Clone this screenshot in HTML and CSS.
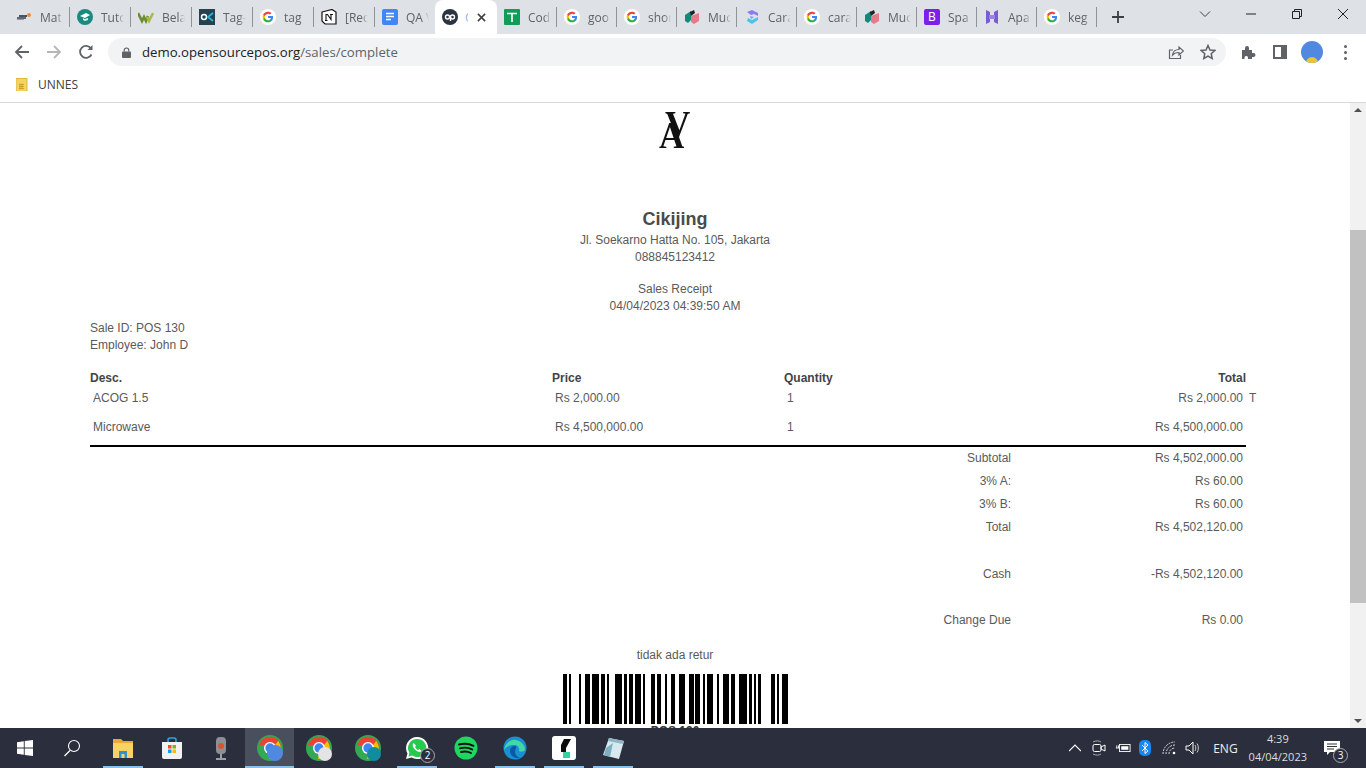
FILE: index.html
```html
<!DOCTYPE html>
<html lang="en">
<head>
  <meta charset="UTF-8">
  <title>Open Source Point of Sale</title>
  <link rel="stylesheet" href="styles.css">
</head>
<body>
  <svg class="defs" width="0" height="0">
    <symbol id="g" viewBox="0 0 24 24">
      <circle cx="12" cy="12" r="12" fill="#fff"/>
      <path fill="#4285f4" d="M19.6 12.2c0-.6-.1-1.100-.2-1.600H12v3h4.300c-.2 1-.8 1.800-1.600 2.400v2h2.600c1.500-1.400 2.300-3.400 2.300-5.800z"/>
      <path fill="#34a853" d="M12 20c2.200 0 4-.7 5.300-1.900l-2.600-2c-.7.500-1.600.8-2.700.8-2.100 0-3.900-1.400-4.500-3.300H4.800v2.100C6.100 18.300 8.800 20 12 20z"/>
      <path fill="#fbbc05" d="M7.500 13.600c-.3-1-.3-2.100 0-3.100V8.400H4.800c-1.100 2.200-1.100 5 0 7.200z"/>
      <path fill="#ea4335" d="M12 7.200c1.200 0 2.200.4 3 1.200l2.300-2.300C15.900 4.800 14.100 4 12 4 8.800 4 6.100 5.700 4.800 8.400l2.700 2.100c.6-1.900 2.400-3.300 4.500-3.300z"/>
    </symbol>
    <symbol id="mu" viewBox="0 0 16 16">
      <path fill="#0f8a7c" d="M1 6l6-4v9l-3 3-3-2z"/>
      <path fill="#e57a88" d="M7 7l8-3v8l-5 3-3-2z"/>
      <path fill="#222" d="M6 3l4-2 1 3-4 3z"/>
    </symbol>
    <symbol id="chrome" viewBox="0 0 28 28">
      <circle cx="14" cy="14" r="10" fill="none" stroke="#34a853" stroke-width="8"/>
      <path d="M5.300 9A10 10 0 0 1 22.700 9L14 9z" fill="#ea4335" stroke="#ea4335" stroke-width="4"/>
      <path d="M22.700 9A10 10 0 0 1 15 24L19 14z" fill="#fbbc05" stroke="#fbbc05" stroke-width="3"/>
      <circle cx="14" cy="14" r="6.500" fill="#fff"/>
      <circle cx="14" cy="14" r="5" fill="#4285f4"/>
    </symbol>
  </svg>

  <div class="browser">
    <div class="tabstrip">
      <div class="tab"><svg class="fav" viewBox="0 0 16 16"><rect x="1" y="8" width="9" height="2" fill="#667"/><rect x="1" y="10" width="7" height="1" fill="#99a"/><circle cx="13" cy="6" r="2" fill="#f08a3c"/><rect x="3" y="6" width="8" height="2" fill="#456"/></svg><span class="tab-title">Mat</span></div>
      <div class="tab"><svg class="fav" viewBox="0 0 16 16"><circle cx="8" cy="8" r="8" fill="#1a8a80"/><path d="M3 7l6-3 4 2-5 3z" fill="#fff"/><path d="M6 9l2 1 3-1v2l-3 1-2-1z" fill="#d5efec"/></svg><span class="tab-title">Tuto</span></div>
      <div class="tab"><svg class="fav" viewBox="0 0 16 16"><path d="M0 4l4 8 2-4 2 4 2-5" fill="none" stroke="#6d8b2f" stroke-width="2.600"/><path d="M9 8l2 4 4-8" fill="none" stroke="#a9b84a" stroke-width="2.400"/></svg><span class="tab-title">Bela</span></div>
      <div class="tab"><svg class="fav" viewBox="0 0 16 16"><rect width="16" height="16" fill="#26414f"/><circle cx="5" cy="8" r="2.500" fill="none" stroke="#fff" stroke-width="1.500"/><path d="M14 4L9 8l5 4" fill="none" stroke="#27b5d8" stroke-width="1.800"/></svg><span class="tab-title">Tag-</span></div>
      <div class="tab"><svg class="fav"><use href="#g"/></svg><span class="tab-title">tag</span></div>
      <div class="tab"><svg class="fav" viewBox="0 0 16 16"><path d="M1 3l10-2.500 4 2.500v12H4l-3-3z" fill="#fff" stroke="#111" stroke-width="1.200"/><path d="M5 5.500h1.500l3.500 5v-5h1.500M4.500 5.500h2M9 5.500h3M5 5.500v6M4 11.500h2.500" fill="none" stroke="#111" stroke-width="1.100"/></svg><span class="tab-title">[Req</span></div>
      <div class="tab tab-before-active"><svg class="fav" viewBox="0 0 16 16"><rect width="16" height="16" rx="2" fill="#4285f4"/><path d="M4 4.500h8M4 7.500h8M4 10.500h5" stroke="#fff" stroke-width="1.500"/></svg><span class="tab-title">QA V</span></div>
      <div class="tab tab-active"><svg class="fav" viewBox="0 0 16 16"><circle cx="8" cy="8" r="8" fill="#2b3440"/><circle cx="5.500" cy="8" r="2" fill="none" stroke="#fff" stroke-width="1.400"/><circle cx="10.500" cy="8" r="2" fill="none" stroke="#fff" stroke-width="1.400"/><path d="M8.500 8v4" stroke="#fff" stroke-width="1.400"/></svg><span class="tab-sliver">O</span><svg class="tab-close" viewBox="0 0 10 10"><path d="M1 1l8 8M9 1l-8 8" stroke="#3c4043" stroke-width="1.700"/></svg></div>
      <div class="tab tab-narrow"><svg class="fav" viewBox="0 0 16 16"><rect width="16" height="16" rx="1" fill="#0f9d58"/><path d="M3 4.500h10M8 4.500V13" stroke="#fff" stroke-width="1.600"/></svg><span class="tab-title">Cod</span></div>
      <div class="tab tab-narrow"><svg class="fav"><use href="#g"/></svg><span class="tab-title">goo</span></div>
      <div class="tab tab-narrow"><svg class="fav"><use href="#g"/></svg><span class="tab-title">shor</span></div>
      <div class="tab tab-narrow"><svg class="fav"><use href="#mu"/></svg><span class="tab-title">Muc</span></div>
      <div class="tab tab-narrow"><svg class="fav" viewBox="0 0 16 16"><path d="M3 3l5-2 6 3v3l-4-2-3 1z" fill="#8b7cf0"/><path d="M14 8v3l-6 4-5-3 1-3 4 2z" fill="#46c6e8"/><path d="M6 7l4 1-3 2z" fill="#7fa0f0"/></svg><span class="tab-title">Cara</span></div>
      <div class="tab tab-narrow"><svg class="fav"><use href="#g"/></svg><span class="tab-title">cara</span></div>
      <div class="tab tab-narrow"><svg class="fav"><use href="#mu"/></svg><span class="tab-title">Muc</span></div>
      <div class="tab tab-narrow"><span class="fav fav-b">B</span><span class="tab-title">Spa</span></div>
      <div class="tab tab-narrow"><svg class="fav" viewBox="0 0 16 16"><path d="M2 1l4 2v10l-4 2zM10 3l4-2v14l-4-2z" fill="#7a5bd6"/><path d="M5 6l6 0v4H5z" fill="#9b83e6"/></svg><span class="tab-title">Apa</span></div>
      <div class="tab tab-narrow"><svg class="fav"><use href="#g"/></svg><span class="tab-title">keg</span></div>
      <svg class="new-tab" viewBox="0 0 12 12"><path d="M6 0v12M0 6h12" stroke="#3c4043" stroke-width="1.800"/></svg>
      <div class="win-controls">
        <svg viewBox="0 0 12 12"><path d="M1 3.500l5 5 5-5" fill="none" stroke="#3c4043" stroke-width="1"/></svg>
        <svg viewBox="0 0 12 12"><path d="M1 6h10" stroke="#222" stroke-width="1"/></svg>
        <svg viewBox="0 0 12 12"><path d="M1.500 3.500h7v7h-7zM3.500 3.500v-2h7v7h-2" fill="none" stroke="#222" stroke-width="1"/></svg>
        <svg viewBox="0 0 12 12"><path d="M1 1l10 10M11 1L1 11" stroke="#222" stroke-width="1"/></svg>
      </div>
    </div>

    <div class="toolbar">
      <svg class="tool" viewBox="0 0 16 16"><path d="M15 8H2M8 2L2 8l6 6" fill="none" stroke="#5f6368" stroke-width="1.800"/></svg>
      <svg class="tool tool-off" viewBox="0 0 16 16"><path d="M1 8h13M8 2l6 6-6 6" fill="none" stroke="#b4b6b9" stroke-width="1.800"/></svg>
      <svg class="tool" viewBox="0 0 16 16"><path d="M13.500 10.500A6 6 0 1 1 13 4.500" fill="none" stroke="#5f6368" stroke-width="1.800"/><path d="M14.500 1v5h-5z" fill="#5f6368"/></svg>
      <div class="omnibox">
        <svg class="lock" viewBox="0 0 10 12"><path d="M2.500 5V3.500a2.500 2.500 0 0 1 5 0V5" fill="none" stroke="#5f6368" stroke-width="1.300"/><rect y="5" width="10" height="7" rx="1" fill="#5f6368"/></svg>
        <span class="url">demo.opensourcepos.org<span class="url-path">/sales/complete</span></span>
        <svg class="omni-icon omni-share" viewBox="0 0 16 16"><path d="M5 6H1.500v8.500h11V11" fill="none" stroke="#5f6368" stroke-width="1.200"/><path d="M4.500 11c.5-3.500 3-5.500 6.500-5.500V3l4.500 4-4.500 4V8.500c-3 0-5 .8-6.500 2.500z" fill="none" stroke="#5f6368" stroke-width="1.200"/></svg>
        <svg class="omni-icon" viewBox="0 0 16 16"><path d="M8 1.500l2 4.500 4.800.5-3.600 3.200 1 4.800L8 12l-4.200 2.500 1-4.800L1.200 6.500 6 6z" fill="none" stroke="#5f6368" stroke-width="1.500"/></svg>
      </div>
      <svg class="ext" viewBox="0 0 16 16"><path d="M1 6h3V4a2 2 0 0 1 4 0v2h3v3h1.500a2 2 0 0 1 0 4H11v2H7v-1.500a1.800 1.800 0 0 0-3.500 0V15H1z" fill="#5f6368"/></svg>
      <svg class="side" viewBox="0 0 14 14"><rect x="1" y="1" width="12" height="12" fill="#fff" stroke="#5f6368" stroke-width="2"/><rect x="8" y="1" width="5" height="12" fill="#5f6368"/></svg>
      <div class="avatar"><span class="avatar-flower"></span></div>
      <div class="kebab"><i></i><i></i><i></i></div>
    </div>

    <div class="bookmarks">
      <svg class="folder" viewBox="0 0 12 12"><rect width="11" height="13" fill="#f3d463" stroke="#e0b93c" stroke-width="1"/><path d="M3 6h5M3 8h5M3 10h5M4 5v6M6 5v6" stroke="#c9a32e" stroke-width="1"/></svg>
      <span>UNNES</span>
    </div>
  </div>

  <div class="viewport">
    <main class="page">
      <div class="receipt">
        <div class="logo"><span class="logo-v">V</span><span class="logo-a">A</span></div>
        <h1 class="company">Cikijing</h1>
        <p>Jl. Soekarno Hatta No. 105, Jakarta</p>
        <p>088845123412</p>
        <p class="receipt-title">Sales Receipt</p>
        <p>04/04/2023 04:39:50 AM</p>

        <div class="sale-info">
          <div>Sale ID: POS 130</div>
          <div>Employee: John D</div>
        </div>

        <table class="items">
          <colgroup>
            <col class="col-desc"><col class="col-price"><col class="col-qty"><col class="col-total"><col class="col-tax">
          </colgroup>
          <thead>
            <tr><th>Desc.</th><th>Price</th><th>Quantity</th><th class="num">Total</th><th></th></tr>
          </thead>
          <tbody>
            <tr class="item"><td>ACOG 1.5</td><td>Rs 2,000.00</td><td>1</td><td class="num">Rs 2,000.00</td><td class="tax">T</td></tr>
            <tr class="item"><td>Microwave</td><td>Rs 4,500,000.00</td><td>1</td><td class="num">Rs 4,500,000.00</td><td></td></tr>
            <tr class="rule"><td colspan="4"></td><td></td></tr>
            <tr class="sum"><td colspan="3" class="num">Subtotal</td><td class="num">Rs 4,502,000.00</td><td></td></tr>
            <tr class="sum"><td colspan="3" class="num">3% A:</td><td class="num">Rs 60.00</td><td></td></tr>
            <tr class="sum"><td colspan="3" class="num">3% B:</td><td class="num">Rs 60.00</td><td></td></tr>
            <tr class="sum"><td colspan="3" class="num">Total</td><td class="num">Rs 4,502,120.00</td><td></td></tr>
            <tr class="sum sum-gap"><td colspan="5"></td></tr>
            <tr class="sum"><td colspan="3" class="num">Cash</td><td class="num">-Rs 4,502,120.00</td><td></td></tr>
            <tr class="sum"><td colspan="5"></td></tr>
            <tr class="sum"><td colspan="3" class="num">Change Due</td><td class="num">Rs 0.00</td><td></td></tr>
          </tbody>
        </table>

        <p class="return-policy">tidak ada retur</p>
        <svg class="barcode" viewBox="563 0 225 50" shape-rendering="crispEdges">
          <path d="M563 0h4v50h-4zM569 0h2v50h-2zM579 0h2v50h-2zM585 0h5v50h-5zM592 0h7v50h-7zM601 0h4v50h-4zM607 0h2v50h-2zM615 0h7v50h-7zM624 0h3v50h-3zM629 0h4v50h-4zM635 0h6v50h-6zM643 0h2v50h-2zM651 0h4v50h-4zM657 0h4v50h-4zM665 0h2v50h-2zM671 0h4v50h-4zM679 0h6v50h-6zM689 0h5v50h-5zM695 0h5v50h-5zM703 0h2v50h-2zM707 0h6v50h-6zM717 0h2v50h-2zM723 0h6v50h-6zM731 0h4v50h-4zM739 0h8v50h-8zM749 0h3v50h-3zM754 0h2v50h-2zM758 0h3v50h-3zM771 0h4v50h-4zM777 0h2v50h-2zM782 0h6v50h-6z"/>
        </svg>
        <p class="barcode-label">POS 130</p>
      </div>
    </main>
    <div class="scrollbar">
      <span class="arrow arrow-up"></span>
      <span class="thumb"></span>
      <span class="arrow arrow-down"></span>
    </div>
  </div>

  <footer class="taskbar">
    <div class="task"><svg class="task-win" viewBox="0 0 16 16"><path d="M0 2.200L6.800 1.200V7.600H0zM7.700 1.100L16 0V7.600H7.700zM0 8.400H6.800V14.800L0 13.800zM7.700 8.400H16V16L7.700 14.900z" fill="#fff"/></svg></div>
    <div class="task"><svg class="task-search" viewBox="0 0 18 18"><circle cx="11" cy="7" r="5.500" fill="none" stroke="#fff" stroke-width="1.100"/><path d="M7 11.500L1.500 17" stroke="#fff" stroke-width="1.300"/></svg></div>
    <div class="task task-open"><svg class="task-icon" viewBox="0 0 24 24"><path d="M2 3h8l2 2h10v17H2z" fill="#e8a93a"/><path d="M2 7h20v15H2z" fill="#f7d364"/><path d="M8 22v-7h8v7h-2.500v-4h-3v4z" fill="#2f8fd8"/></svg></div>
    <div class="task"><svg class="task-icon" viewBox="0 0 24 24"><path d="M8 7V4a2 2 0 0 1 2-2h4a2 2 0 0 1 2 2v3" fill="none" stroke="#29a8e0" stroke-width="1.600"/><path d="M2 6h20v15a2 2 0 0 1-2 2H4a2 2 0 0 1-2-2z" fill="#f2f2f2"/><rect x="8" y="9" width="3.500" height="3.500" fill="#f25022"/><rect x="12.500" y="9" width="3.500" height="3.500" fill="#7fba00"/><rect x="8" y="13.500" width="3.500" height="3.500" fill="#00a4ef"/><rect x="12.500" y="13.500" width="3.500" height="3.500" fill="#ffb900"/></svg></div>
    <div class="task"><svg class="task-icon" viewBox="0 0 24 24"><rect x="7" y="1" width="10" height="17" rx="4" fill="#8a8f98"/><circle cx="12" cy="10" r="3" fill="#d8552b"/><path d="M12 18v4M7 23h10" stroke="#9a9ea6" stroke-width="2"/></svg></div>
    <div class="task task-active"><svg class="task-icon task-chrome"><use href="#chrome"/></svg><span class="badge badge-avatar"></span></div>
    <div class="task"><svg class="task-icon task-chrome"><use href="#chrome"/></svg><span class="badge badge-person"></span></div>
    <div class="task"><svg class="task-icon task-chrome"><use href="#chrome"/></svg><span class="badge badge-teal"></span></div>
    <div class="task task-open"><svg class="task-icon task-wa" viewBox="0 0 24 24"><path d="M12 1a11 11 0 0 0-9.500 16.500L1 23l5.700-1.500A11 11 0 1 0 12 1z" fill="#fff"/><path d="M12 3a9 9 0 0 0-7.600 13.800L3.500 20.500l3.800-1A9 9 0 1 0 12 3z" fill="#29c94f"/><path d="M8.500 7c-1.500 1.500-1 4 1.500 6.500s5 3 6.500 1.500l-2-2-1.500 1c-1-.5-2.500-2-3-3l1-1.500z" fill="#fff"/></svg><span class="count">2</span></div>
    <div class="task"><svg class="task-icon" viewBox="0 0 24 24"><circle cx="12" cy="12" r="11.500" fill="#1ed760"/><path d="M5 8.500c5-1.300 10-1 14.500 1.300M6 12.300c4.300-1.100 8.500-.8 12.300 1.200M7 16c3.500-.8 7-.6 10 1" fill="none" stroke="#111" stroke-width="1.900" stroke-linecap="round"/></svg></div>
    <div class="task task-open"><svg class="task-icon" viewBox="0 0 24 24"><circle cx="12" cy="12" r="11.500" fill="#1b8fd6"/><path d="M1 14C2 7 8 3 13 4c5 1 9 5 9 9 0 3-4 3-6 2 1-3-1-6-5-6-5 0-8 2-10 5z" fill="#43d6a6"/><path d="M7 15c0 5 5 8 10 7-3-1-5-4-5-6 0-3 3-6 0-6-3 0-5 2-5 5z" fill="#0c5aa6"/></svg></div>
    <div class="task task-open"><svg class="task-icon" viewBox="0 0 24 24"><rect width="24" height="24" rx="3" fill="#fff"/><path d="M12 3h7l-5 9v4H9V9z" fill="#0d0d0d"/><rect x="11" y="16" width="7" height="6" fill="#2bd6a0"/></svg></div>
    <div class="task task-open"><svg class="task-icon" viewBox="0 0 24 24"><path d="M8 2l15 3-5 18L2 19z" fill="#d8e8ef"/><path d="M8 2l15 3-1 3L7 5z" fill="#8fb4c4"/><path d="M5 12l7-5-3 14-6-2z" fill="#7fb0c2"/></svg></div>

    <div class="tray">
      <svg class="tray-icon tray-chevron" viewBox="0 0 12 12"><path d="M0 9l6-6 6 6" fill="none" stroke="#fff" stroke-width="1.200"/></svg>
      <svg class="tray-icon" viewBox="0 0 16 16"><rect x="2" y="4.500" width="8" height="7" rx="1.500" fill="none" stroke="#fff"/><path d="M10 7l4-2v6l-4-2z" fill="none" stroke="#fff"/><path d="M2 2c3-1.500 6-1.500 8 0M2 14c3 1.500 6 1.500 8 0" fill="none" stroke="#aaa"/></svg>
      <svg class="tray-icon" viewBox="0 0 18 16"><rect x="5" y="4" width="12" height="8" fill="none" stroke="#fff"/><rect x="7" y="6" width="8" height="4" fill="#fff"/><path d="M1 8h4M2 5v3M4 5v3" stroke="#fff"/></svg>
      <svg class="tray-bt" viewBox="0 0 12 16"><rect width="12" height="16" rx="5" fill="#1a86f0"/><path d="M3 5l6 6-3 2.500v-11L9 5l-6 6" fill="none" stroke="#fff"/></svg>
      <svg class="tray-icon" viewBox="0 0 16 16"><path d="M2 14A12 12 0 0 1 14 2M5 14a9 9 0 0 1 9-9M8 14a6 6 0 0 1 6-6" fill="none" stroke="#ddd" stroke-dasharray="2 1"/><circle cx="13" cy="13" r="1.300" fill="#fff"/></svg>
      <svg class="tray-icon" viewBox="0 0 16 16"><path d="M1 6h3l4-4v12l-4-4H1z" fill="none" stroke="#fff"/><path d="M10 5c1 1.500 1 4.500 0 6M12 3.500c1.800 2 1.800 7 0 9" fill="none" stroke="#ccc"/></svg>
      <span class="lang">ENG</span>
      <div class="clock"><span>4:39</span><span>04/04/2023</span></div>
      <div class="notify">
        <svg viewBox="0 0 16 14"><path d="M0 0h16v11H6l-3 3v-3H0z" fill="#fff"/><path d="M3 3h10M3 5.500h10M3 8h7" stroke="#333"/></svg>
        <span class="count count-notify">3</span>
      </div>
    </div>
  </footer>
</body>
</html>
```

FILE: styles.css
```css
/* General */
* {
  margin: 0;
  padding: 0;
  box-sizing: border-box;
}

html, body {
  height: 100%;
  overflow: hidden;
}

body {
  display: flex;
  flex-direction: column;
  height: 768px;
  font-family: 'Open Sans', sans-serif;
  background: white;
}

.defs {
  display: none;
}

/* Tab strip */
.tabstrip {
  display: flex;
  align-items: stretch;
  height: 34px;
  padding-left: 9px;
  background: #dee1e6;
}

.tab {
  position: relative;
  display: flex;
  align-items: center;
  flex: none;
  width: 61px;
  padding: 0 0 0 7px;
}

.tab-narrow,
.tab-before-active {
  width: 60px;
}

.tab::after {
  content: "";
  position: absolute;
  right: 0;
  top: 7px;
  width: 1px;
  height: 20px;
  background: #8f9296;
}

.tab-before-active::after,
.tab-active::after {
  display: none;
}

.tab-active {
  width: 62px;
  height: 34px;
  background: white;
  border-radius: 8px 8px 0 0;
}

.fav {
  flex: none;
  width: 16px;
  height: 16px;
}

.fav-b {
  display: block;
  background: #7c1fe8;
  border-radius: 2px;
  color: white;
  font-size: 12px;
  line-height: 16px;
  text-align: center;
}

.tab-title {
  width: 23px;
  margin-left: 8px;
  overflow: hidden;
  white-space: nowrap;
  font-size: 12px;
  color: #5f6368;
  -webkit-mask-image: linear-gradient(to right, black 70%, transparent);
  mask-image: linear-gradient(to right, black 70%, transparent);
}

.tab-sliver {
  width: 3px;
  margin-left: 7px;
  overflow: hidden;
  font-size: 12px;
  color: #8fb4d8;
}

.tab-close {
  width: 9px;
  height: 9px;
  margin-left: 9px;
}

.new-tab {
  flex: none;
  width: 12px;
  height: 12px;
  margin: 11px 0 0 15px;
}

.win-controls {
  display: flex;
  margin-left: auto;
}

.win-controls svg {
  width: 46px;
  height: 12px;
  margin-top: 8px;
}

/* Toolbar */
.toolbar {
  display: flex;
  align-items: center;
  height: 34px;
  padding-top: 2px;
  background: white;
}

.tool {
  flex: none;
  width: 16px;
  height: 16px;
  margin-left: 14px;
  margin-right: 2px;
}

.omnibox {
  display: flex;
  align-items: center;
  flex: none;
  width: 1118px;
  height: 28px;
  margin-left: 12px;
  padding: 0 10px 0 14px;
  background: #f1f3f4;
  border-radius: 14px;
}

.lock {
  width: 9px;
  height: 11px;
}

.url {
  margin-left: 11px;
  font-size: 13.2px;
  color: #202124;
}

.url-path {
  color: #5f6368;
}

.omni-icon {
  width: 16px;
  height: 16px;
}

.omni-share {
  margin-left: auto;
  margin-right: 16px;
}

.ext {
  flex: none;
  width: 16px;
  height: 16px;
  margin-left: 15px;
}

.side {
  flex: none;
  width: 14px;
  height: 14px;
  margin-left: 16px;
}

.avatar {
  position: relative;
  flex: none;
  width: 22px;
  height: 22px;
  margin-left: 14px;
  overflow: hidden;
  background: #5289e0;
  border-radius: 50%;
}

.avatar-flower {
  position: absolute;
  left: 5px;
  bottom: 0;
  width: 12px;
  height: 6px;
  background: #e8c63c;
  border-radius: 6px 6px 0 0;
}

.kebab {
  display: flex;
  flex-direction: column;
  gap: 3px;
  margin-left: 21px;
}

.kebab i {
  width: 3px;
  height: 3px;
  background: #5f6368;
  border-radius: 50%;
}

/* Bookmarks */
.bookmarks {
  display: flex;
  align-items: center;
  height: 35px;
  padding-left: 16px;
  padding-bottom: 2px;
  background: white;
  border-bottom: 1px solid #d9d9d9;
  font-size: 12px;
  color: #3c4043;
}

.folder {
  width: 12px;
  height: 13px;
  margin-right: 10px;
}

/* Page content */
.viewport {
  display: flex;
  flex: 1;
  min-height: 0;
}

.page {
  flex: 1;
  overflow: hidden;
}

.receipt {
  width: 1170px;
  margin: 0 auto;
  padding-top: 8px;
  font-family: 'Liberation Sans', sans-serif;
  font-size: 12px;
  line-height: 17px;
  color: #5a5a5a;
  text-align: center;
}

.logo {
  display: grid;
  justify-content: center;
  height: 95px;
  font-family: 'Liberation Serif', serif;
  font-weight: bold;
  color: #111;
}

.logo span {
  grid-area: 1 / 1;
  line-height: 36px;
  font-size: 38px;
  transform: scaleX(.92);
}

.logo-v {
  margin: -5px 0 0 6px;
}

.logo-a {
  margin: 6px 6px 0 0;
}

.company {
  font-size: 18px;
  line-height: 26px;
  font-weight: bold;
  color: #4a4a4a;
}

.receipt-title {
  margin-top: 15px;
}

.sale-info {
  margin-top: 5px;
  text-align: left;
}

/* Receipt table */
.items {
  width: 100%;
  margin-top: 15px;
  border-collapse: collapse;
  table-layout: fixed;
  text-align: left;
}

.col-desc { width: 462px; }
.col-price { width: 232px; }
.col-qty { width: 231px; }
.col-total { width: 231px; }
.col-tax { width: 14px; }

th {
  height: 18px;
  color: #444;
  font-weight: bold;
}

td {
  padding: 0 3px;
}

.item td {
  height: 29px;
  padding-bottom: 6px;
}

.items th.num {
  text-align: right;
}

.items td.num {
  text-align: right;
}

.sum td.num:first-child {
  padding-right: 4px;
}

.tax {
  white-space: nowrap;
  overflow: visible;
}

.rule td {
  height: 2px;
  padding: 0;
}

.rule td:first-child {
  background: black;
}

.sum td {
  height: 23px;
}

.sum-gap td {
  height: 24px;
}

.return-policy {
  margin-top: 15px;
}

.barcode {
  display: block;
  width: 225px;
  height: 50px;
  margin: 10px auto 0;
}

.barcode-label {
  font-size: 12px;
  font-weight: bold;
  line-height: 14px;
  color: #333;
}

/* Scrollbar */
.scrollbar {
  display: flex;
  flex-direction: column;
  align-items: center;
  flex: none;
  width: 16px;
  background: #f1f1f1;
}

.thumb {
  width: 16px;
  height: 373px;
  margin-top: 115px;
  background: #c1c1c1;
}

.arrow {
  flex: none;
  width: 0;
  height: 0;
  border-left: 4px solid transparent;
  border-right: 4px solid transparent;
}

.arrow-up {
  margin-top: 5px;
  border-bottom: 4px solid #505050;
  margin-bottom: 3px;
}

.arrow-down {
  margin-top: auto;
  margin-bottom: 5px;
  border-top: 4px solid #505050;
}

/* Taskbar */
.taskbar {
  display: flex;
  align-items: center;
  flex: none;
  height: 40px;
  background: #2b2f3d;
  color: white;
}

.task {
  position: relative;
  display: flex;
  align-items: center;
  justify-content: center;
  flex: none;
  width: 49px;
  height: 40px;
}

.task-open::after,
.task-active::after {
  content: "";
  position: absolute;
  left: 5px;
  right: 4px;
  bottom: 0;
  height: 2px;
  background: #8cc0ea;
}

.task-active {
  background: #4a4f5e;
}

.task-active::after {
  left: 0;
  right: 0;
}

.task-win {
  width: 16px;
  height: 16px;
}

.task-search {
  width: 18px;
  height: 18px;
  margin-right: 3px;
}

.task-icon {
  width: 24px;
  height: 24px;
}

.task-chrome {
  width: 26px;
  height: 26px;
}

.badge {
  position: absolute;
  right: 11px;
  bottom: 7px;
  width: 14px;
  height: 14px;
  border-radius: 50%;
}

.badge-avatar {
  width: 16px;
  height: 16px;
  background: #5289e0;
}

.badge-person {
  background: #e4e4e4;
}

.badge-teal {
  background: #0f8ca0;
}

.count {
  position: absolute;
  right: 6px;
  bottom: 5px;
  width: 15px;
  height: 15px;
  background: #2b2f3d;
  border: 1px solid #aaa;
  border-radius: 50%;
  font-size: 10px;
  line-height: 13px;
  text-align: center;
  color: white;
}

/* Tray */
.tray {
  display: flex;
  align-items: center;
  margin-left: auto;
  margin-right: 11px;
  height: 40px;
}

.tray-icon {
  width: 16px;
  height: 16px;
  margin-right: 8px;
}

.tray-chevron {
  width: 12px;
  height: 12px;
  margin-right: 10px;
}

.tray-bt {
  width: 12px;
  height: 16px;
  margin-right: 10px;
}

.lang {
  margin-left: 4px;
  font-size: 12px;
  color: #eee;
}

.clock {
  display: flex;
  flex-direction: column;
  align-items: center;
  margin-left: 11px;
  font-size: 11px;
  line-height: 18px;
  color: #ddd;
}

.notify {
  position: relative;
  width: 46px;
  margin-left: 2px;
  height: 40px;
  display: flex;
  align-items: center;
  justify-content: center;
}

.notify svg {
  width: 16px;
  height: 14px;
}

.count-notify {
  right: 7px;
  bottom: 5px;
}
```
